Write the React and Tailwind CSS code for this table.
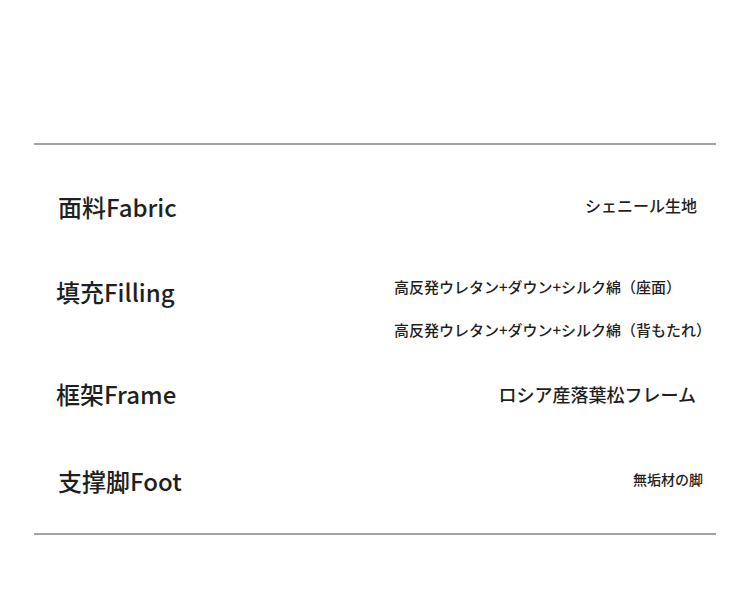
export default function App() {
  const rows = [
    { label: '面料Fabric', lx: 'pl-[24px]', lt: 'mt-[46px]', h: 'h-[104px]', rt: 'mt-[50px]', pr: 'pr-[19px]', size: 'text-[16px] leading-[20px]', lines: ['シェニール生地'] },
    { label: '填充Filling', lx: 'pl-[22px]', lt: 'mt-[27px]', h: 'h-[110px]', rt: 'mt-[28px]', pr: 'pr-[5px]', size: 'text-[15px] leading-[20px]', lines: ['高反発ウレタン+ダウン+シルク綿（座面）', '高反発ウレタン+ダウン+シルク綿（背もたれ）'] },
    { label: '框架Frame', lx: 'pl-[22px]', lt: 'mt-[19px]', h: 'h-[80px]', rt: 'mt-[23px]', pr: 'pr-[20px]', size: 'text-[18px] leading-[24px]', lines: ['ロシア産落葉松フレーム'] },
    { label: '支撑脚Foot', lx: 'pl-[24px]', lt: 'mt-[26px]', h: 'h-[94px]', rt: 'mt-[30px]', pr: 'pr-[13px]', size: 'text-[14px] leading-[20px]', lines: ['無垢材の脚'] },
  ];

  return (
    <div className="w-[750px] h-[612px] bg-white text-[#1f1f1f] font-['Noto_Sans_CJK_JP','Noto_Sans_CJK_SC',sans-serif] pt-[143px]">
      <div className="mx-[34px]">
        <div className="h-[2px] bg-[#a3a3a3]" />
        {rows.map((r) => (
          <div key={r.label} className={`${r.h} flex justify-between items-start`}>
            <div className={`${r.lx} ${r.lt} text-[24px] leading-[32px] font-medium whitespace-nowrap`}>{r.label}</div>
            <div className={`${r.pr} ${r.rt} ${r.size} font-medium text-left whitespace-nowrap`}>
              {r.lines.map((t, i) => (
                <div key={i} className={i > 0 ? 'mt-[23px]' : ''}>{t}</div>
              ))}
            </div>
          </div>
        ))}
        <div className="h-[2px] bg-[#a3a3a3]" />
      </div>
    </div>
  );
}
